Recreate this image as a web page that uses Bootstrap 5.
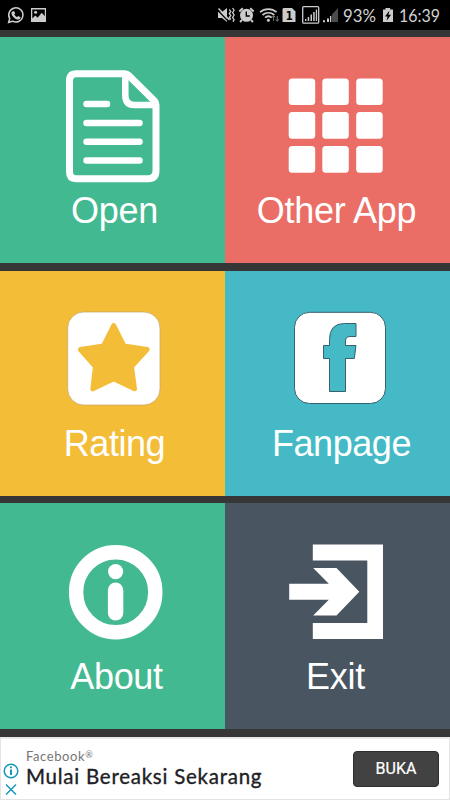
<!DOCTYPE html>
<html lang="id">
<head>
<meta charset="utf-8">
<meta name="viewport" content="width=device-width, initial-scale=1">
<title>Menu</title>
<link href="https://cdn.jsdelivr.net/npm/bootstrap@5.3.0/dist/css/bootstrap.min.css" rel="stylesheet">
<style>
body{background:#363636;font-family:"Liberation Sans",Arial,sans-serif}
.screen{width:450px;height:800px}
.status{height:30px;background:#000;color:#ccc}
.status svg{display:block}
.status text{font-family:Lato,sans-serif;fill:#d2d2d2}
.menu{padding-top:7px;height:707px}
.tile{height:226px;color:#fff;border:0;border-radius:0;text-decoration:none}
.tile:hover{color:#fff}
.lower{margin-top:7px}
.middle{margin-top:8px}
.middle .tile{height:225px}
.tile svg{display:block;width:225px;height:150px;flex:none}
.caption-text{font-size:36px;line-height:42px;margin-top:3px;letter-spacing:-.3px;white-space:nowrap;text-align:center}
.label-other{padding-right:2px}
.middle .caption-text{margin-top:2px;letter-spacing:-.45px}
.green{background:#42b990}.coral{background:#ea6d66}.amber{background:#f3bd38}
.teal{background:#45bac6}.slate{background:#495560}
.ad{height:63px;background:#fff;border:1px solid #e4e4e4;border-top:2px solid #e9e9e9;padding:0 10px 0 1px}
.ad-marks{width:24px;padding-top:22px}
.ad-brand{font:13px/16px Lato,sans-serif;color:#757575;letter-spacing:.6px;padding-top:1px}
.ad-brand sup{font-size:9px;top:-.35em;line-height:0}
.ad-title{font:400 20.500px/24px Lato,sans-serif;color:#202124;letter-spacing:.75px;white-space:nowrap;-webkit-text-stroke:.35px #202124}
.ad-btn,.ad-btn:hover{width:86px;height:36px;background:#424242;color:#fff;border-radius:4px;border:1px solid #2d2d2d;font:400 16px/34px Roboto,sans-serif;-webkit-text-stroke:.2px #fff;padding:0;margin-top:12px}
</style>
<script src="https://cdn.jsdelivr.net/npm/bootstrap@5.3.0/dist/js/bootstrap.bundle.min.js"></script>
</head>
<body>
<div class="screen d-flex flex-column overflow-hidden">
<header class="status">
<svg width="450" height="30" viewBox="0 0 450 30" fill="#ccc">
<!-- chat -->
<path d="M8.7 22.3l1-3.8a7.1 7.1 0 1 1 2.8 2.7z" fill="none" stroke="#ccc" stroke-width="1.5"/>
<path d="M12.5 11.4l1.4-.5 1.3 2.4-.9 1.2c.7 1.300 1.500 2 2.800 2.600l1.200-1 2.200 1.200c0 1.500-1 2.200-2.200 2.200-3.300 0-7-4-6.900-6.600.1-.7.500-1.200 1.100-1.500z"/>
<!-- picture -->
<path fill-rule="evenodd" d="M31 8h15v14H31zM32.300 9.400v9.100l3-3 2.300 2.300 4.200-5.100 3 3.600V9.400z"/><circle cx="35.600" cy="12.300" r="1.500"/>
<!-- muted speaker -->
<path d="M218 12h4l5-4v14l-5-4h-4z"/><path d="M217.500 10l12 12.500" stroke="#000" stroke-width="1.200"/><path d="M218.500 8.500l11 11.500" stroke="#ccc" stroke-width="1.500"/>
<path d="M229.300 9.500l1.500 2-1.500 2 1.500 2-1.500 2 1.500 2M232.600 8l1.500 2.300-1.500 2.400 1.500 2.300-1.500 2.400 1.500 2.300-1.200 2" fill="none" stroke="#ccc" stroke-width="1.300"/>
<!-- alarm -->
<circle cx="246.500" cy="15.300" r="6.500"/><path d="M239.300 11.500l3.500-3.300M253.700 11.500l-3.500-3.300M242 20l-2 2M251 20l2 2" stroke="#ccc" stroke-width="1.900"/><path d="M246.300 11.500v4.500h3.500" fill="none" stroke="#000" stroke-width="1.400"/>
<!-- wifi -->
<path d="M260 12.200c4.500-4.200 12-4.200 16.600 0M262.500 15c3.400-3 8.500-3 11.800 0M265 17.700c2-1.700 4.800-1.700 6.800 0" fill="none" stroke="#ccc" stroke-width="1.700"/><circle cx="268.400" cy="20.200" r="1.500"/>
<path d="M273.600 21v-5M272 17.500l1.600-2 1.600 2M277.300 16v5M275.800 19.300l1.500 2 1.500-2" stroke="#777" fill="none"/>
<!-- sim -->
<path d="M283.500 8h8.500l3.500 3.500V22h-13V9z"/><text x="285.700" y="20" style="font:bold 13px 'DejaVu Sans',sans-serif;fill:#000" textLength="7" lengthAdjust="spacingAndGlyphs">1</text>
<!-- signals -->
<rect x="302.700" y="6.700" width="16" height="16.500" rx="1" fill="none" stroke="#ccc" stroke-width="1.300"/>
<path d="M305 19h1.400v2H305zM307.700 17h1.500v4h-1.500zM310.500 14.500h1.500V21h-1.500zM313.200 12h1.500v9h-1.500zM315.800 9.500h1.300V21h-1.300z"/>
<path d="M323 20.200h2v2h-2zM327 18.500h2V22h-2zM330 16h1.300v6H330z"/><path d="M332 14.500V22h6V8z" fill="#4c4c4c"/>
<text x="343" y="22" font-size="18" textLength="33" lengthAdjust="spacingAndGlyphs">93%</text>
<!-- battery -->
<path d="M385.500 8h4.700v1.600h2.800V22h-10V9.600h2.500z"/><path d="M389.400 10.500l-4.400 6h2.500l-.9 4.200 4.500-6h-2.600z" fill="#000"/>
<text x="399" y="22" font-size="18" textLength="41" lengthAdjust="spacingAndGlyphs">16:39</text>
</svg>
</header>
<main class="menu">
<div class="row g-0">
<a class="tile green col-6 d-flex flex-column" href="#">
<svg viewBox="0 37 225 150" fill="none" stroke="#fff"><path d="M76 73.700h49q2 0 3.500 1.500L154.500 101q1.500 1.500 1.500 4v65.500q0 8.300-8 8.300H76q-6.500 0-6.500-7V81q0-7.300 6.500-7.300z" stroke-width="7"/><path d="M125.300 75v20q0 10 9 10H156" stroke-width="6.500"/><path d="M86.500 104h20.500M86.500 123h53M86.500 141.800h53M86.500 160.500h53" stroke-width="6.500" stroke-linecap="round"/></svg>
<span class="caption-text ps-1">Open</span></a>
<a class="tile coral col-6 d-flex flex-column" href="#">
<svg viewBox="225 37 225 150" fill="#fff"><g id="squares"><rect x="288.700" y="78.400" width="26.500" height="26.700" rx="3.500"/><rect x="322.300" y="78.400" width="26.500" height="26.700" rx="3.500"/><rect x="356.200" y="78.400" width="26.500" height="26.700" rx="3.500"/></g><use href="#squares" y="33.600"/><use href="#squares" y="67.700"/></svg>
<span class="caption-text label-other">Other App</span></a>
</div>
<div class="row g-0 middle">
<a class="tile amber col-6 d-flex flex-column" href="#">
<svg viewBox="0 271 225 150"><rect x="67.700" y="312" width="92.300" height="93" rx="16" fill="#fff" stroke="#c1a568" stroke-width=".7"/><path d="M113.700 325.500L124 346l23 3.500-15.500 17 3 22.300-20.800-10-20.800 10 2.500-22.300-15-17 23-3.500z" fill="#f3bd38" stroke="#f3bd38" stroke-width="5" stroke-linejoin="round"/></svg>
<span class="caption-text ps-1">Rating</span></a>
<a class="tile teal col-6 d-flex flex-column" href="#">
<svg viewBox="225 271 225 150" stroke="#35616e"><rect x="294.500" y="312.300" width="91" height="91.200" rx="15" fill="#fff"/><path d="M329.500 391.500v-33h-6v-13h6v-6q0-16 15-16h11.500v13h-6q-4.500 0-4.500 4.500v4.500H356l-1.700 13h-8.800v33z" fill="#45bac6"/></svg>
<span class="caption-text ps-2">Fanpage</span></a>
</div>
<div class="row g-0 lower">
<a class="tile green col-6 d-flex flex-column" href="#">
<svg viewBox="0 503 225 150" fill="#fff"><ellipse cx="115.700" cy="592.200" rx="39.600" ry="40" fill="none" stroke="#fff" stroke-width="14.400"/><circle cx="115.600" cy="571.600" r="7.600"/><rect x="107.900" y="582.500" width="15.400" height="38" rx="7.700"/></svg>
<span class="caption-text ps-2">About</span></a>
<a class="tile slate col-6 d-flex flex-column" href="#">
<svg viewBox="225 503 225 150" fill="#fff"><path d="M312.800 544.500H383v94.500h-70.200v-16h54.500v-62.500h-54.500zM289.200 583.800h39.600L313.200 568H336.500L359.300 591.700 336.500 615.500H313.200L328.800 599.800H289.200z"/></svg>
<span class="caption-text pe-1">Exit</span></a>
</div>
</main>
<section class="ad d-flex">
<div class="ad-marks"><svg class="d-block" width="20" height="36" viewBox="0 0 20 36" fill="none" stroke="#1698bb" stroke-width="1.500"><circle cx="9" cy="10" r="6.800"/><path d="M9 8.500V14M9 5.500v1.700" stroke-width="2"/><path d="M4 23.500l10 10M14 23.500l-10 10"/></svg></div>
<div class="flex-grow-1 pt-2"><div class="ad-brand">Facebook<sup>®</sup></div><div class="ad-title">Mulai Bereaksi Sekarang</div></div>
<button class="ad-btn btn">BUKA</button>
</section>
</div>
</body>
</html>
